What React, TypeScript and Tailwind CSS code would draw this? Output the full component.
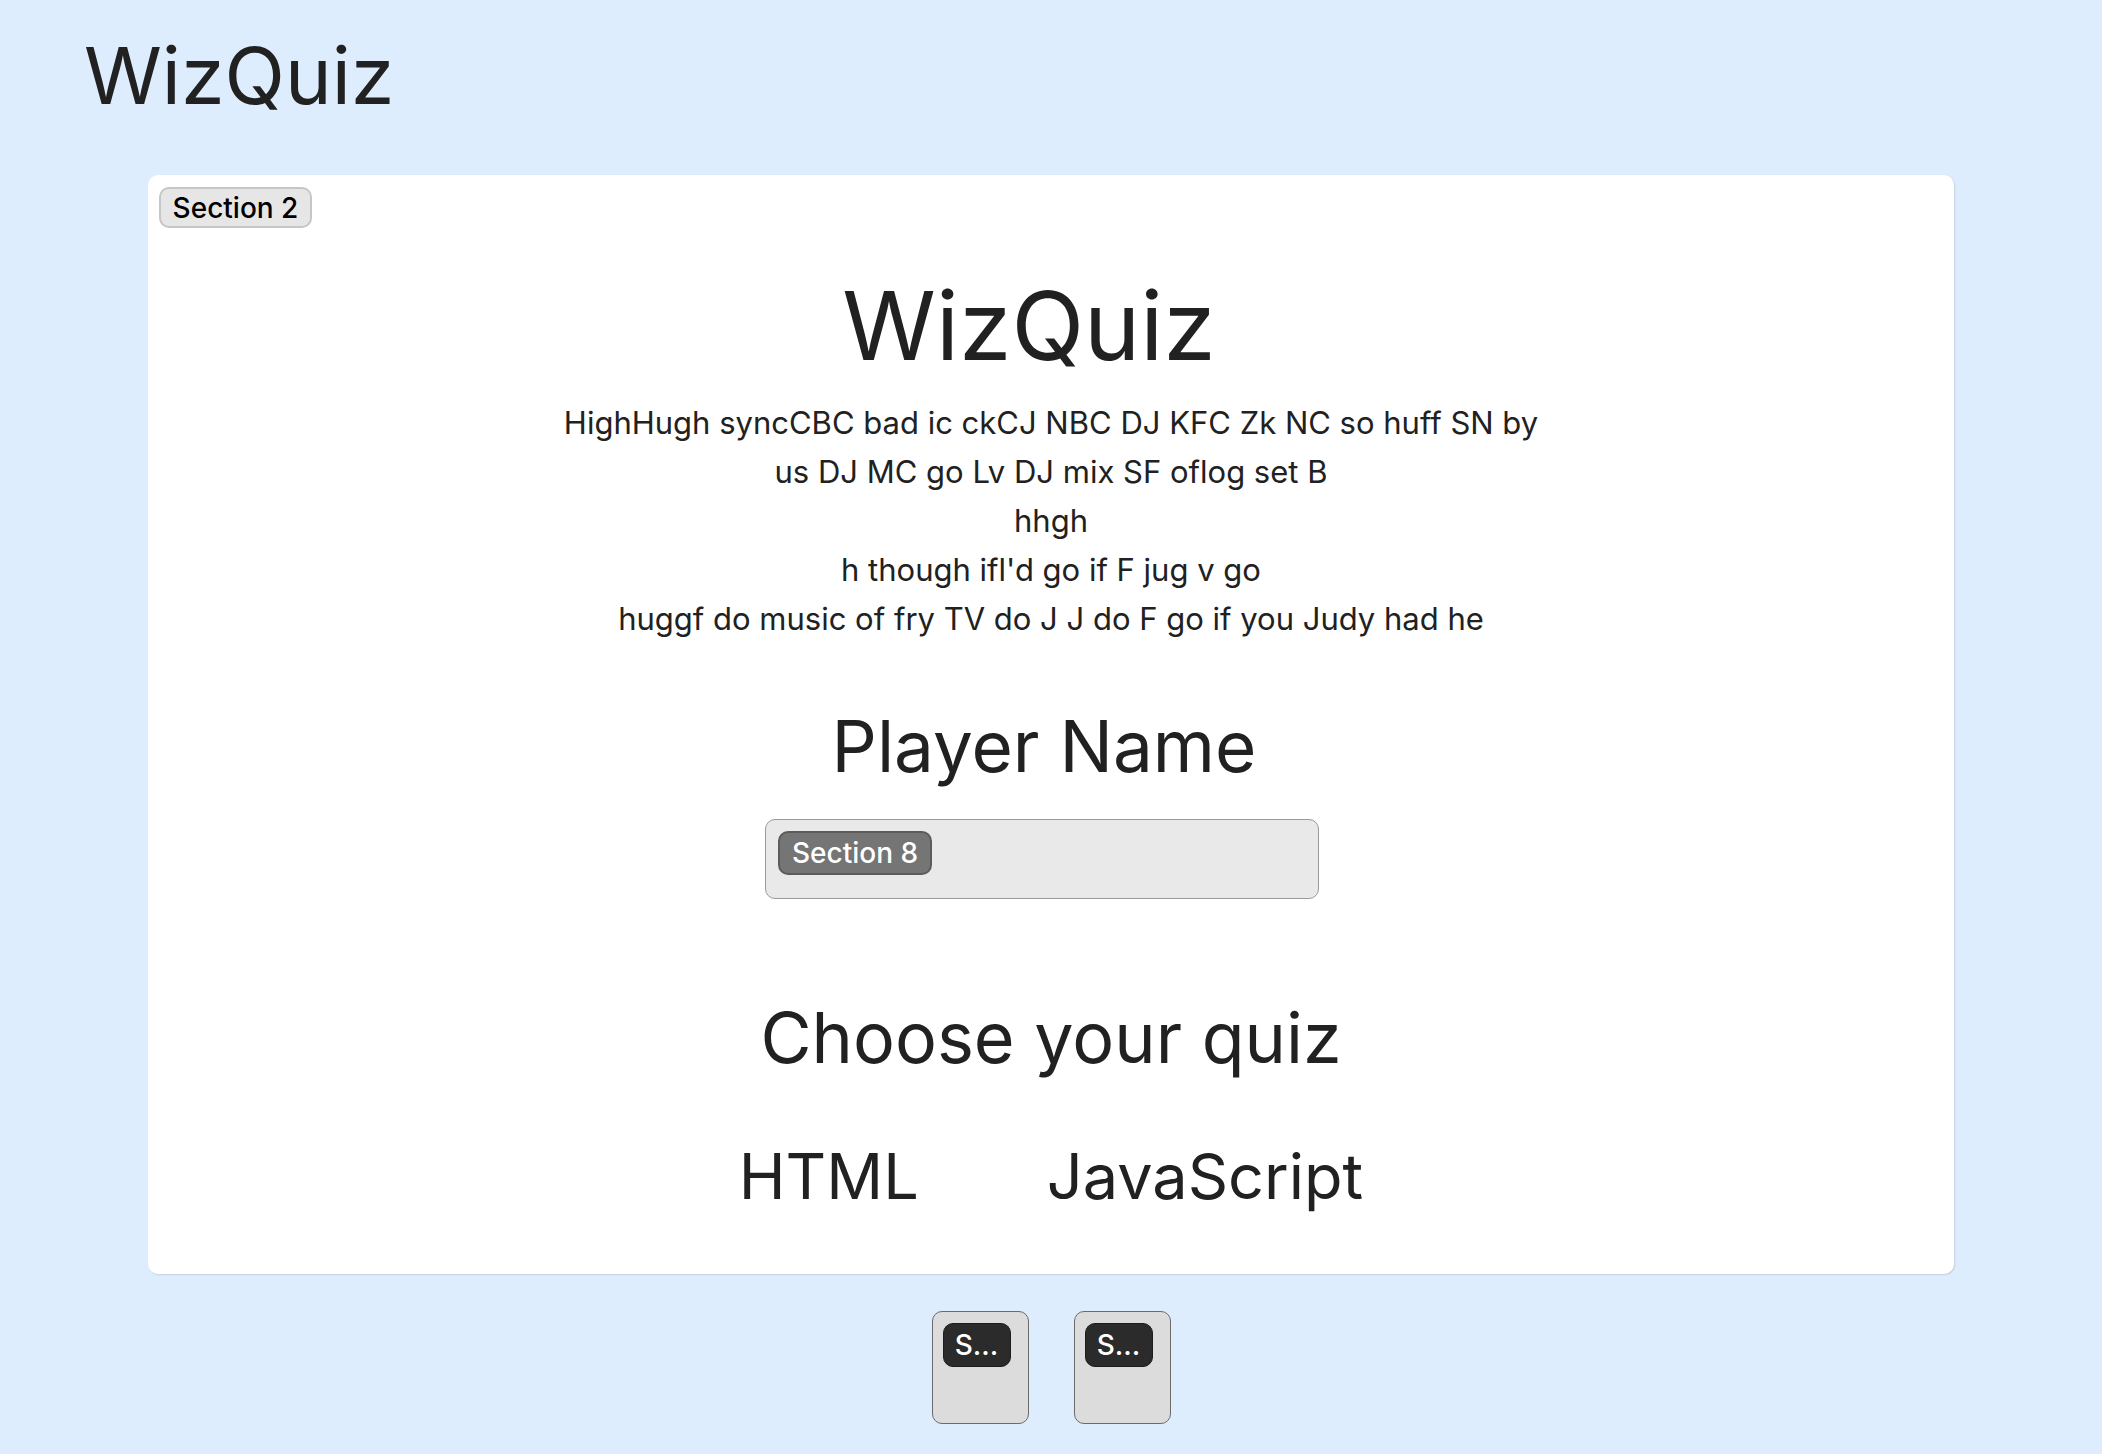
import React from 'react';

const intro = [
  'HighHugh syncCBC bad ic ckCJ NBC DJ KFC Zk NC so huff SN by',
  'us DJ MC go Lv DJ mix SF oflog set B',
  'hhgh',
  "h though ifl'd go if F jug v go",
  'huggf do music of fry TV do J J do F go if you Judy had he',
];

function Tag({ label, dark }: { label: string; dark?: boolean }) {
  return (
    <span
      className={
        dark
          ? 'flex h-[44px] w-[68px] items-center justify-center rounded-[10px] border border-[#1c1c1c] bg-[#2b2b2b] text-[28px] font-medium text-white'
          : 'flex h-[44px] w-[154px] items-center justify-center rounded-[10px] border-2 border-[#5c5c5c] bg-[#757575] text-[28px] font-medium text-white'
      }
    >
      {label}
    </span>
  );
}

export default function App() {
  return (
    <div className="min-h-screen bg-[#deedfd] pb-[30px] text-[#212121] [font-family:Inter,'Noto_Sans',sans-serif]">
      <h1 className="pl-[84px] pt-[36px] text-[79px] font-normal leading-none">WizQuiz</h1>

      <main className="relative mx-auto mt-[60px] flex w-[1806px] flex-col items-center rounded-[10px] bg-white pb-[66px] pt-[103px] shadow-[1px_1px_2px_rgba(0,0,0,0.12)]">
        <span className="absolute left-[11px] top-[12px] flex h-[41px] w-[153px] items-center justify-center rounded-[10px] border-2 border-[#c6c6c6] bg-[#e6e6e6] text-[28px] font-medium text-black">
          Section 2
        </span>

        <h2 className="pr-[44px] text-[95px] font-normal leading-none">WizQuiz</h2>

        <div className="mt-[25px] text-center text-[31px] leading-[49px]">
          {intro.map((line) => (
            <p key={line}>{line}</p>
          ))}
        </div>

        <h3 className="mt-[68px] pr-[14px] text-[71px] font-normal leading-none">Player Name</h3>

        <div className="relative mr-[18px] mt-[37px] h-[80px] w-[554px] rounded-[10px] border border-[#9a9a9a] bg-[#e9e9e9]">
          <div className="absolute left-[12px] top-[11px]">
            <Tag label="Section 8" />
          </div>
        </div>

        <h3 className="mt-[104px] text-[70px] font-normal leading-none">Choose your quiz</h3>

        <div className="mt-[72px] flex gap-[128px] text-[63px] leading-none">
          <button type="button">HTML</button>
          <button type="button">JavaScript</button>
        </div>
      </main>

      <div className="mt-[37px] flex justify-center gap-[45px]">
        {[0, 1].map((i) => (
          <div
            key={i}
            className="h-[113px] w-[97px] rounded-[10px] border border-[#6b6b6b] bg-[#dcdcdc] pl-[10px] pt-[11px]"
          >
            <Tag label="S..." dark />
          </div>
        ))}
      </div>
    </div>
  );
}
